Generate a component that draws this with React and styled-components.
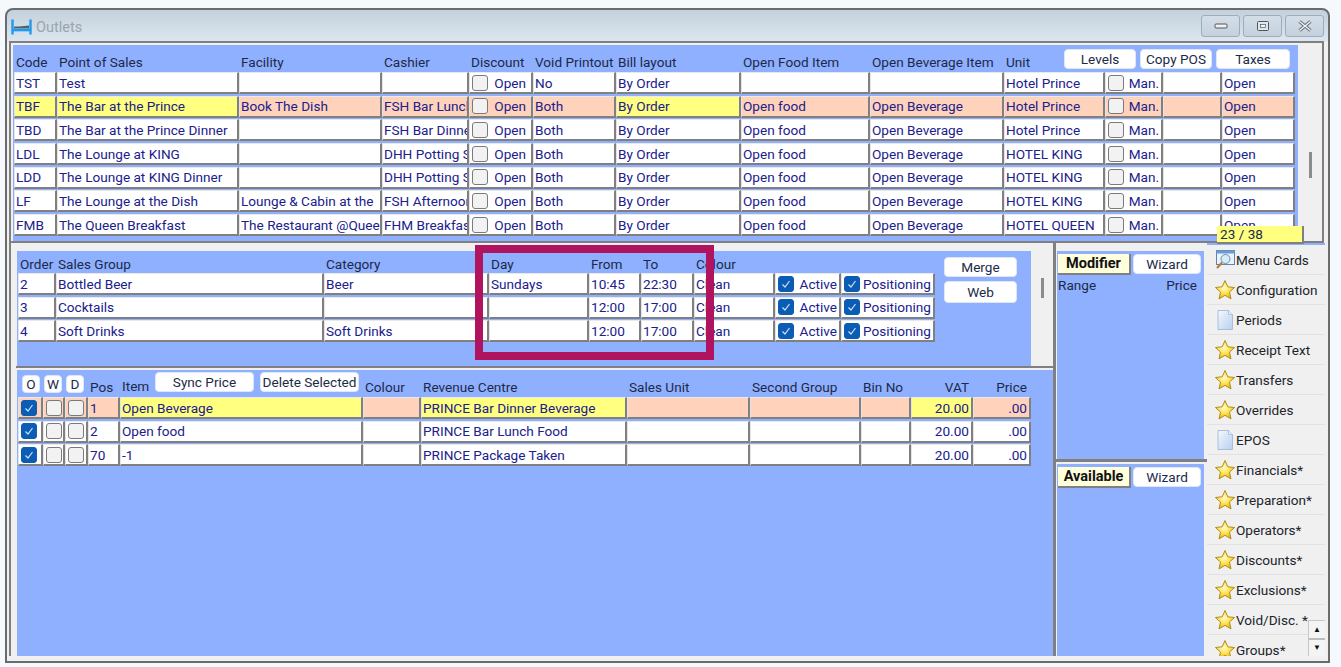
import React from 'react';
import styled, {createGlobalStyle} from 'styled-components';

const blue = '#8fb0ff';
const grey = '#f0f0f0';
const edge = '#808080';
const ink = '#1c2a48';
const navy = '#20208c';

const GlobalStyle = createGlobalStyle`
  html, body { margin: 0; padding: 0; background: #f5f8fc; }
  body { font-family: Roboto, "Liberation Sans", sans-serif; font-size: 13.6px; color: ${ink}; }
  * { box-sizing: border-box; }
`;

const Page = styled.div`
  width: 1341px;
  height: 667px;
  padding: 8px 0 0 5px;
  overflow: hidden;
`;

const Window = styled.div`
  position: relative;
  width: 1325px;
  height: 655px;
  border: 2px solid #6b6b6b;
  border-top-left-radius: 8px;
  border-top-right-radius: 8px;
  padding: 0 3px 5px 2px;
  background: linear-gradient(#c4d0da 0, #dbe6f0 31px, ${grey} 32px);
  display: flex;
  flex-direction: column;
`;

const TitleBar = styled.div`
  height: 31px;
  flex: none;
  display: flex;
  align-items: center;
  gap: 4px;
  padding: 3px 1px 0 2px;
`;

const Title = styled.span`
  color: #9aa5ad;
  font-size: 14.5px;
`;

const WinButtons = styled.div`
  margin-left: auto;
  margin-top: -3px;
  display: flex;
  gap: 3px;
`;

const WinButton = styled.div`
  width: 39px;
  height: 22px;
  border: 1px solid #9cadbd;
  border-radius: 3px;
  background: linear-gradient(#d3dee8, #c4d1dd);
  display: flex;
  align-items: center;
  justify-content: center;
`;

const TopFrame = styled.div`
  height: 202px;
  flex: none;
  width: 1315px;
  border: 2px solid ${edge};
  padding-left: 2px;
  padding-top: 2px;
  display: flex;
  background: ${grey};
`;

const TopPanel = styled.div`
  width: 1285px;
  height: 196px;
  flex: none;
  background: ${blue};
  padding-left: 1px;
`;

const Gutter = styled.div`
  flex: 1;
  display: flex;
  justify-content: center;
  padding-top: ${p => p.$top}px;
  padding-left: ${p => p.$left || 0}px;
`;

const Thumb = styled.div`
  width: 3px;
  height: ${p => p.$h}px;
  background: #8c8c8c;
`;

const Head = styled.div`
  display: grid;
  grid-template-columns: ${p => p.$cols};
  height: ${p => p.$h}px;
  align-items: end;
`;

const Label = styled.div`
  padding: 0 0 ${p => p.$pb ?? 2}px 2px;
  white-space: nowrap;
  text-align: ${p => p.$right ? 'right' : 'left'};
  padding-right: ${p => p.$right ? 4 : 0}px;
`;

const HeadTools = styled.div`
  grid-column: ${p => p.$span};
  display: flex;
  align-items: flex-end;
  height: 100%;
`;

const ToolGroup = styled.div`
  margin-left: auto;
  align-self: flex-start;
  display: flex;
  gap: 4px;
  padding-top: ${p => p.$top}px;
  padding-right: ${p => p.$right}px;
`;

const Btn = styled.div`
  width: ${p => p.$w}px;
  height: ${p => p.$h || 20}px;
  margin-left: ${p => p.$ml || 0}px;
  background: #fff;
  border: 1px solid #dfe6f5;
  border-radius: 4px;
  color: ${ink};
  display: flex;
  align-items: center;
  justify-content: center;
  white-space: nowrap;
  overflow: hidden;
`;

const Rows = styled.div`
  display: grid;
  grid-template-columns: ${p => p.$cols};
  grid-auto-rows: 22px;
  row-gap: 1.7px;
`;

const Cell = styled.div`
  background: ${p => p.$bg === 'y' ? '#ffff80' : p.$bg === 'p' ? '#ffd3bb' : '#fff'};
  border-top: 1px solid #e9e9e9;
  border-left: 1px solid #e4e4e4;
  border-right: 2px solid ${edge};
  border-bottom: 2px solid ${edge};
  color: ${navy};
  padding: 0 ${p => p.$right ? 2 : 0}px 0 ${p => p.$right ? 0 : 1}px;
  line-height: 18px;
  white-space: nowrap;
  overflow: hidden;
  display: flex;
  align-items: center;
  justify-content: ${p => p.$right ? 'flex-end' : 'flex-start'};
`;

const Box = styled.span`
  flex: none;
  width: 16px;
  height: 16px;
  border-radius: 3px;
  background: ${p => p.$on ? '#0b5cb5' : '#f2f2f2'};
  border: 1px solid ${p => p.$on ? '#0b5cb5' : '#7a7a7a'};
  display: inline-flex;
  align-items: center;
  justify-content: center;
  margin-left: ${p => p.$ml ?? 1}px;
`;

const BoxText = styled.span`
  margin-left: auto;
  padding-right: ${p => p.$pr ?? 2}px;
`;

const Bottom = styled.div`
  flex: 1;
  display: flex;
  min-height: 0;
`;

const LeftCol = styled.div`
  width: 1047px;
  flex: none;
  border-left: 2px solid ${edge};
  border-right: 3px solid ${edge};
  display: flex;
  flex-direction: column;
`;

const SalesRow = styled.div`
  height: 125px;
  flex: none;
  padding-top: 8px;
  padding-left: 1px;
  margin-left: 5px;
  display: flex;
  border-bottom: 2px solid ${edge};
`;

const SalesPanel = styled.div`
  width: 1014px;
  height: 115px;
  flex: none;
  background: ${blue};
  padding-left: 1px;
  display: flex;
`;

const Stack = styled.div`
  margin-left: 9px;
  padding-top: 6px;
  display: flex;
  flex-direction: column;
  gap: 4px;
`;

const ItemWrap = styled.div`
  flex: 1;
  padding: 2px 0 0 6px;
`;

const ItemPanel = styled.div`
  height: 100%;
  background: ${blue};
  padding-left: 1px;
`;

const ItemHeadBtns = styled.div`
  display: flex;
  align-items: flex-start;
  height: 100%;
  padding-top: 2px;
`;

const SmallBtn = styled(Btn)`
  width: 18px;
  height: 18px;
  align-self: start;
  margin-top: 5px;
`;

const ItemTitle = styled.span`
  padding: 6px 0 0 2px;
  width: 35px;
  flex: none;
`;

const MidCol = styled.div`
  width: 151px;
  flex: none;
  padding: 8px 3px 0 1px;
  display: flex;
  flex-direction: column;
`;

const SidePanel = styled.div`
  background: ${blue};
  flex: ${p => p.$grow ? 1 : 'none'};
  height: ${p => p.$grow ? 'auto' : '208px'};
  padding: 3px 3px 0 1px;
`;

const Divider = styled.div`
  height: 3px;
  margin: 0 -3px 2px -1px;
  flex: none;
  background: ${edge};
`;

const TabRow = styled.div`
  display: flex;
  justify-content: space-between;
  height: 21px;
`;

const BoldTab = styled.div`
  width: 73px;
  height: 21px;
  background: #ffffdc;
  border-right: 2px solid ${edge};
  border-bottom: 2px solid ${edge};
  color: #111;
  font-weight: 700;
  font-size: 14.5px;
  display: flex;
  align-items: center;
  justify-content: center;
`;

const RangeRow = styled.div`
  display: flex;
  justify-content: space-between;
  padding: 2px 4px 0 0;
`;

const Sidebar = styled.div`
  position: relative;
  flex: 1;
  height: 100%;
  overflow: hidden;
  border-top: 2px solid ${blue};
`;

const SideItem = styled.div`
  height: 30px;
  border-bottom: 1px solid #e2e2e2;
  display: flex;
  align-items: center;
  padding: 1px 0 0 7px;
  color: #22242a;
  white-space: nowrap;
`;

const Spin = styled.div`
  position: absolute;
  right: 0;
  bottom: 0;
  width: 17px;
  height: 36px;
  display: flex;
  flex-direction: column;
  gap: 2px;
  border-left: 1px solid #c8c8c8;
  border-top: 1px solid #c8c8c8;
  background: #bdbdbd;
`;

const SpinBtn = styled.div`
  flex: 1;
  background: #f4f4f4;
  display: flex;
  align-items: center;
  justify-content: center;
  font-size: 8px;
  color: #111;
`;

const Counter = styled.div`
  position: absolute;
  left: 1210px;
  top: 216px;
  width: 87px;
  height: 18px;
  background: #ffff80;
  border-right: 2px solid ${edge};
  border-bottom: 2px solid ${edge};
  color: ${ink};
  padding-left: 3px;
  line-height: 17px;
`;

const Highlight = styled.div`
  position: absolute;
  left: 468px;
  top: 235px;
  width: 239px;
  height: 115px;
  border: 8px solid #b0145f;
  pointer-events: none;
`;

const Tick = () => (
  <svg width="10" height="10" viewBox="0 0 10 10">
    <path d="M1.5 5.5 L4 8 L8.5 2" fill="none" stroke="#cfe2f7" strokeWidth="1.2" />
  </svg>
);

const Check = ({on, ml}) => <Box $on={on} $ml={ml}>{on && <Tick />}</Box>;

const Star = () => (
  <svg width="22" height="22" viewBox="0 0 22 22">
    <defs>
      <radialGradient id="starFill" cx="45%" cy="40%" r="60%">
        <stop offset="0" stopColor="#fffbd0" />
        <stop offset="0.55" stopColor="#ffe04a" />
        <stop offset="1" stopColor="#e8ad10" />
      </radialGradient>
    </defs>
    <path d="M11 1.5 L13.8 7.8 L20.6 8.5 L15.5 13 L17 19.9 L11 16.3 L5 19.9 L6.5 13 L1.4 8.5 L8.2 7.8 Z"
      fill="url(#starFill)" stroke="#b08f20" strokeWidth="1" strokeLinejoin="round" />
  </svg>
);

const Doc = () => (
  <svg width="22" height="22" viewBox="0 0 22 22">
    <defs>
      <linearGradient id="docFill" x1="0" y1="0" x2="1" y2="1">
        <stop offset="0" stopColor="#f4f8fe" />
        <stop offset="1" stopColor="#b7d0f0" />
      </linearGradient>
    </defs>
    <path d="M4 1.5 H14.5 L18.5 5.5 V20.5 H4 Z" fill="url(#docFill)" stroke="#9db4cf" strokeWidth="0.8" />
    <path d="M14.5 1.5 V5.5 H18.5" fill="#e8f0fa" stroke="#9db4cf" strokeWidth="0.7" />
  </svg>
);

const Cards = () => (
  <svg width="22" height="22" viewBox="0 0 22 22">
    <rect x="2.5" y="1.5" width="18" height="14" fill="#eaf3fb" stroke="#5d84b3" />
    <rect x="2.5" y="1.5" width="18" height="3" fill="#6d9ad0" />
    <circle cx="11.5" cy="10" r="4.5" fill="#d6ecf6" stroke="#6f8ea8" />
    <path d="M8 13.5 L3 19" stroke="#b87a38" strokeWidth="2.2" />
  </svg>
);

const Bed = () => (
  <svg width="21" height="16" viewBox="0 0 21 16">
    <path d="M1.5 0.5 V15.5 M19.5 0.5 V15.5" stroke="#1d9bf0" strokeWidth="2.4" />
    <path d="M3 9.5 V7.5 H8 L18 6.5 V9.5 Z" fill="#55606b" />
    <path d="M2 11 H19" stroke="#1d9bf0" strokeWidth="2.6" />
  </svg>
);

const topCols = '43px 182px 143px 87px 64px 83px 125px 129px 134px 101px 58px 59px 73px';
const salesCols = '38px 268px 165px 100px 52px 53px 81px 66px 94px';
const itemCols = '25px 22px 23px 32px 243px 58px 206px 123px 111px 50px 62px 58px';

const outlets = [
  ['TST', 'Test', '', '', 'No', 'By Order', '', '', 'Hotel Prince'],
  ['TBF', 'The Bar at the Prince', 'Book The Dish', 'FSH Bar Lunch', 'Both', 'By Order', 'Open food', 'Open Beverage', 'Hotel Prince'],
  ['TBD', 'The Bar at the Prince Dinner', '', 'FSH Bar Dinner', 'Both', 'By Order', 'Open food', 'Open Beverage', 'Hotel Prince'],
  ['LDL', 'The Lounge at KING', '', 'DHH Potting Shed', 'Both', 'By Order', 'Open food', 'Open Beverage', 'HOTEL KING'],
  ['LDD', 'The Lounge at KING Dinner', '', 'DHH Potting Shed', 'Both', 'By Order', 'Open food', 'Open Beverage', 'HOTEL KING'],
  ['LF', 'The Lounge at the Dish', 'Lounge & Cabin at the', 'FSH Afternoon', 'Both', 'By Order', 'Open food', 'Open Beverage', 'HOTEL KING'],
  ['FMB', 'The Queen Breakfast', 'The Restaurant @Queen', 'FHM Breakfast', 'Both', 'By Order', 'Open food', 'Open Beverage', 'HOTEL QUEEN'],
];

const groups = [
  ['2', 'Bottled Beer', 'Beer', 'Sundays', '10:45', '22:30'],
  ['3', 'Cocktails', '', '', '12:00', '17:00'],
  ['4', 'Soft Drinks', 'Soft Drinks', '', '12:00', '17:00'],
];

const items = [
  ['1', 'Open Beverage', 'PRINCE  Bar Dinner Beverage'],
  ['2', 'Open food', 'PRINCE Bar Lunch Food'],
  ['70', '-1', 'PRINCE Package Taken'],
];

const menu = [
  ['Menu Cards', Cards], ['Configuration', Star], ['Periods', Doc], ['Receipt Text', Star],
  ['Transfers', Star], ['Overrides', Star], ['EPOS', Doc], ['Financials*', Star],
  ['Preparation*', Star], ['Operators*', Star], ['Discounts*', Star], ['Exclusions*', Star],
  ['Void/Disc. *', Star], ['Groups*', Star],
];

const OutletRow = ({row, hot}) => {
  const [code, pos, facility, cashier, voidP, bill, food, bev, unit] = row;
  const bg = hot ? 'p' : undefined;
  return (
    <>
      <Cell $bg={hot ? 'y' : undefined}>{code}</Cell>
      <Cell $bg={hot ? 'y' : undefined}>{pos}</Cell>
      <Cell $bg={bg}>{facility}</Cell>
      <Cell $bg={bg}>{cashier}</Cell>
      <Cell $bg={bg}><Check /><BoxText $pr={5}>Open</BoxText></Cell>
      <Cell $bg={bg}>{voidP}</Cell>
      <Cell $bg={hot ? 'y' : undefined}>{bill}</Cell>
      <Cell $bg={bg}>{food}</Cell>
      <Cell $bg={bg}>{bev}</Cell>
      <Cell $bg={bg}>{unit}</Cell>
      <Cell $bg={bg}><Check /><BoxText>Man.</BoxText></Cell>
      <Cell $bg={bg} />
      <Cell $bg={bg}>Open</Cell>
    </>
  );
};

export default function App () {
  return (
    <Page>
      <GlobalStyle />
      <Window>
        <TitleBar>
          <Bed />
          <Title>Outlets</Title>
          <WinButtons>
            <WinButton>
              <svg width="14" height="8" viewBox="0 0 14 8"><rect x="1" y="2" width="12" height="4" rx="1" fill="#eef2f6" stroke="#555" /></svg>
            </WinButton>
            <WinButton>
              <svg width="14" height="12" viewBox="0 0 14 12"><rect x="1.5" y="1.5" width="11" height="9" rx="1" fill="#dfe7ee" stroke="#555" /><rect x="4.5" y="4.5" width="5" height="3" fill="#f3f6f9" stroke="#555" strokeWidth="0.7" /></svg>
            </WinButton>
            <WinButton>
              <svg width="16" height="12" viewBox="0 0 16 12">
                <path d="M2.5 1.5 L13.5 10.5 M13.5 1.5 L2.5 10.5" stroke="#6a6f75" strokeWidth="3.4" />
                <path d="M2.5 1.5 L13.5 10.5 M13.5 1.5 L2.5 10.5" stroke="#eef2f6" strokeWidth="1.4" />
              </svg>
            </WinButton>
          </WinButtons>
        </TitleBar>

        <TopFrame>
          <TopPanel>
            <Head $cols={topCols} $h={27}>
              <Label>Code</Label>
              <Label>Point of Sales</Label>
              <Label>Facility</Label>
              <Label>Cashier</Label>
              <Label>Discount</Label>
              <Label>Void Printout</Label>
              <Label>Bill layout</Label>
              <Label>Open Food Item</Label>
              <Label>Open Beverage Item</Label>
              <HeadTools $span="10 / -1">
                <Label>Unit</Label>
                <ToolGroup $top={4} $right={5}>
                  <Btn $w={72}>Levels</Btn>
                  <Btn $w={72}>Copy POS</Btn>
                  <Btn $w={74}>Taxes</Btn>
                </ToolGroup>
              </HeadTools>
            </Head>
            <Rows $cols={topCols}>
              {outlets.map((r, i) => <OutletRow key={r[0]} row={r} hot={i === 1} />)}
            </Rows>
          </TopPanel>
          <Gutter $top={107} $left={1}><Thumb $h={26} /></Gutter>
        </TopFrame>

        <Bottom>
          <LeftCol>
            <SalesRow>
              <SalesPanel>
                <div>
                  <Head $cols={salesCols} $h={22}>
                    <Label $pb={1}>Order</Label>
                    <Label $pb={1}>Sales Group</Label>
                    <Label $pb={1}>Category</Label>
                    <Label $pb={1}>Day</Label>
                    <Label $pb={1}>From</Label>
                    <Label $pb={1}>To</Label>
                    <Label $pb={1}>Colour</Label>
                  </Head>
                  <Rows $cols={salesCols}>
                    {groups.map(g => (
                      <React.Fragment key={g[0]}>
                        <Cell>{g[0]}</Cell>
                        <Cell>{g[1]}</Cell>
                        <Cell>{g[2]}</Cell>
                        <Cell>{g[3]}</Cell>
                        <Cell>{g[4]}</Cell>
                        <Cell>{g[5]}</Cell>
                        <Cell>Clean</Cell>
                        <Cell><Check on ml={1} /><BoxText>Active</BoxText></Cell>
                        <Cell><Check on ml={1} /><BoxText>Positioning</BoxText></Cell>
                      </React.Fragment>
                    ))}
                  </Rows>
                </div>
                <Stack>
                  <Btn $w={73}>Merge</Btn>
                  <Btn $w={73} $h={22}>Web</Btn>
                </Stack>
              </SalesPanel>
              <Gutter $top={27}><Thumb $h={20} /></Gutter>
            </SalesRow>

            <ItemWrap>
              <ItemPanel>
                <Head $cols={itemCols} $h={27}>
                  <SmallBtn $ml={4}>O</SmallBtn>
                  <SmallBtn $ml={1}>W</SmallBtn>
                  <SmallBtn $ml={1}>D</SmallBtn>
                  <Label>Pos</Label>
                  <ItemHeadBtns>
                    <ItemTitle>Item</ItemTitle>
                    <Btn $w={99}>Sync Price</Btn>
                    <Btn $w={99} $ml={6}>Delete Selected</Btn>
                  </ItemHeadBtns>
                  <Label>Colour</Label>
                  <Label>Revenue Centre</Label>
                  <Label>Sales Unit</Label>
                  <Label>Second Group</Label>
                  <Label>Bin No</Label>
                  <Label $right>VAT</Label>
                  <Label $right>Price</Label>
                </Head>
                <Rows $cols={itemCols}>
                  {items.map((it, i) => {
                    const hot = i === 0 ? 'p' : undefined;
                    const yel = i === 0 ? 'y' : undefined;
                    return (
                      <React.Fragment key={it[0]}>
                        <Cell $bg={hot}><Check on /></Cell>
                        <Cell $bg={hot}><Check ml={1} /></Cell>
                        <Cell $bg={hot}><Check ml={1} /></Cell>
                        <Cell $bg={hot}>{it[0]}</Cell>
                        <Cell $bg={yel}>{it[1]}</Cell>
                        <Cell $bg={hot} />
                        <Cell $bg={yel}>{it[2]}</Cell>
                        <Cell $bg={hot} />
                        <Cell $bg={hot} />
                        <Cell $bg={hot} />
                        <Cell $bg={yel} $right>20.00</Cell>
                        <Cell $bg={hot} $right>.00</Cell>
                      </React.Fragment>
                    );
                  })}
                </Rows>
              </ItemPanel>
            </ItemWrap>
          </LeftCol>

          <MidCol>
            <SidePanel>
              <TabRow>
                <BoldTab>Modifier</BoldTab>
                <Btn $w={68}>Wizard</Btn>
              </TabRow>
              <RangeRow><span>Range</span><span>Price</span></RangeRow>
            </SidePanel>
            <Divider />
            <SidePanel $grow>
              <TabRow>
                <BoldTab>Available</BoldTab>
                <Btn $w={68}>Wizard</Btn>
              </TabRow>
            </SidePanel>
          </MidCol>

          <Sidebar>
            {menu.map(([label, Icon]) => (
              <SideItem key={label}><Icon />{label}</SideItem>
            ))}
            <Spin>
              <SpinBtn>▲</SpinBtn>
              <SpinBtn>▼</SpinBtn>
            </Spin>
          </Sidebar>
        </Bottom>

        <Counter>23 / 38</Counter>
        <Highlight />
      </Window>
    </Page>
  );
}
